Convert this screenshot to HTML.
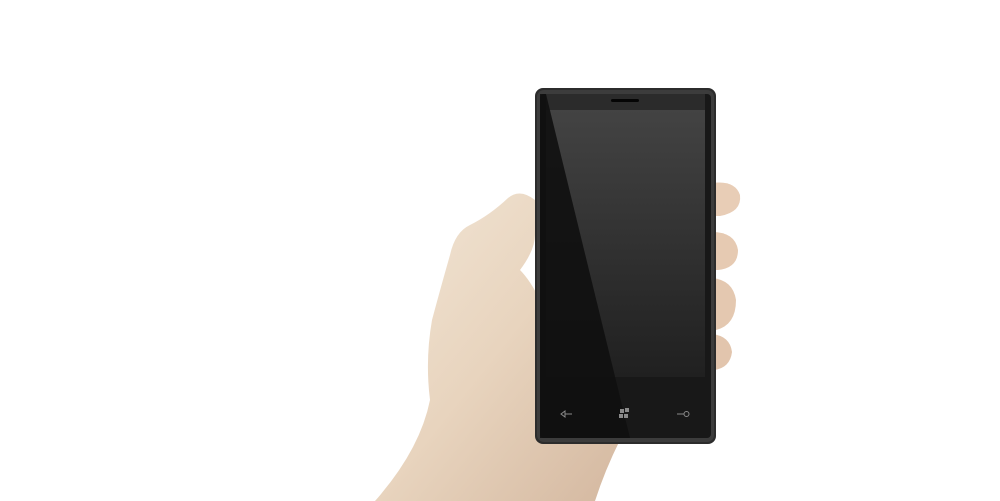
<!DOCTYPE html>
<html><head><style>
html,body{margin:0;padding:0;background:#fff;width:1000px;height:501px;overflow:hidden}
</style></head><body>
<svg width="1000" height="501" viewBox="0 0 1000 501" xmlns="http://www.w3.org/2000/svg">
<defs>
<linearGradient id="skin" x1="0" y1="0" x2="1" y2="1">
<stop offset="0" stop-color="#f2e6d6"/><stop offset="0.5" stop-color="#e8d4be"/><stop offset="1" stop-color="#d4b8a0"/>
</linearGradient>
<linearGradient id="scr" x1="0" y1="0" x2="0" y2="1">
<stop offset="0" stop-color="#434343"/><stop offset="1" stop-color="#202020"/>
</linearGradient>
</defs>
<path d="M712 183 Q735 180 740 195 Q742 212 720 216 L712 216Z" fill="#e8cdb6"/>
<path d="M712 232 Q735 232 738 250 Q738 268 718 270 L712 270Z" fill="#e6cab2"/>
<path d="M712 278 Q733 280 736 300 Q736 325 716 330 L712 330Z" fill="#e4c8b0"/>
<path d="M712 334 Q730 336 732 352 Q730 368 714 370 L712 370Z" fill="#e2c5ad"/>
<path d="M535 200 Q520 188 508 198 Q490 215 470 225 Q455 232 450 255 Q440 290 432 320 Q425 360 430 400 Q420 450 375 501 L595 501 Q605 470 620 440 L540 440 L540 300 Q530 280 520 270 Q535 250 535 235Z" fill="url(#skin)"/>
<rect x="535" y="88" width="181" height="356" rx="8" fill="#2c2c2c"/>
<rect x="537" y="90" width="177" height="352" rx="7" fill="#3c3c3c"/>
<rect x="540" y="94" width="171" height="344" rx="4" fill="#181818"/>
<rect x="546" y="94" width="159" height="16" fill="#2b2b2b"/>
<rect x="546" y="110" width="159" height="267" fill="url(#scr)"/>
<path d="M540 94 L546 94 L630 438 L540 438Z" fill="#101010" opacity="0.9"/>
<rect x="611" y="99" width="28" height="3" rx="1.5" fill="#050505"/>
<g stroke="#8a8a8a" stroke-width="1" fill="none">
<path d="M561 414 L565 411 L565 417 Z M565 414 L572 414"/>
<path d="M677 414 L684 414"/><circle cx="686.5" cy="414" r="2.5"/>
</g>
<g fill="#8a8a8a">
<rect x="620" y="409" width="4" height="4"/><rect x="625" y="408" width="4" height="4"/>
<rect x="619" y="414" width="4" height="4"/><rect x="624" y="414" width="4" height="4"/>
</g>
</svg>
</body></html>
